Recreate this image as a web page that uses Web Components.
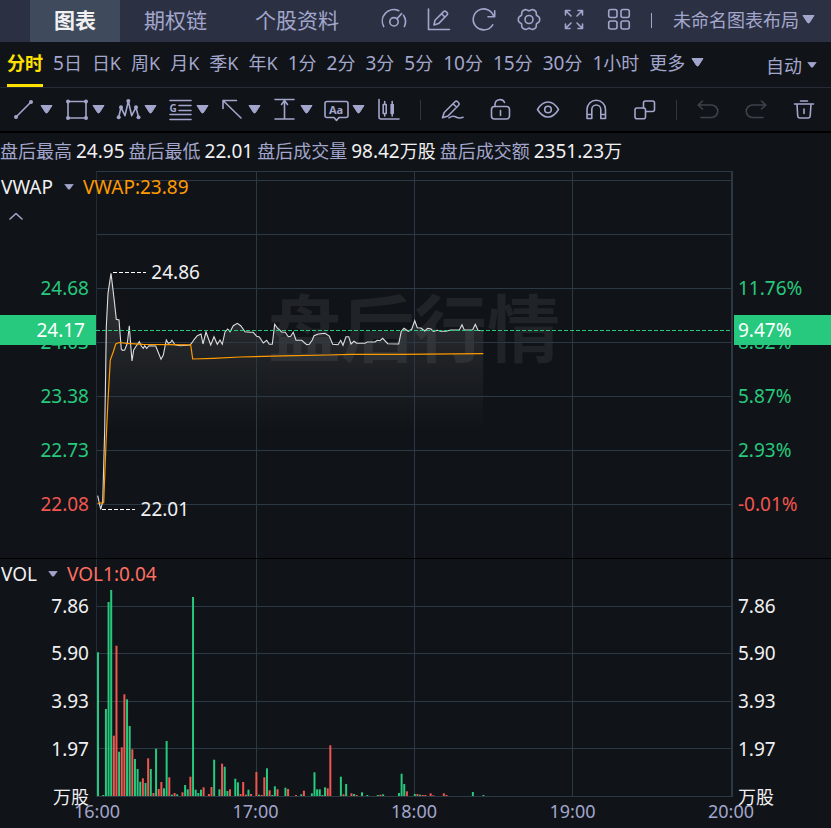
<!DOCTYPE html>
<html lang="zh-CN">
<head>
<meta charset="utf-8">
<meta name="viewport" content="width=device-width, initial-scale=1">
<title>图表</title>
<style>
  :root {
    --bg: #101317; --bar: #2b3142; --bar-active: #3f4b5c; --muted: #a3a6cc; --text: #f0f0f2;
    --grid: #2d3845; --up: #26c97d; --down: #f0564f; --vwap: #ff9a00; --accent: #ffe100; --line: #262b36;
  }
  html, body { margin: 0; height: 100%; background: var(--bg); }
  body { font-family: "Noto Sans", "Noto Sans CJK SC", sans-serif; font-size: 18px; color: var(--muted); }
</style>
</head>
<body>
<stock-app></stock-app>
<script>
const BASE = `
  <style>
    *, *::before { box-sizing: border-box; }
    button { font: inherit; color: inherit; background: none; border: 0; padding: 0; margin: 0; cursor: pointer; white-space: nowrap; }
  </style>`;

const define = (name, html, setup) => customElements.define(name, class extends HTMLElement {
  constructor() {
    super();
    this.attachShadow({ mode: 'open' }).innerHTML = BASE + html;
  }
  connectedCallback() { if (setup) setup(this, this.shadowRoot); }
});

/* Six-lobed gear outline */
const gear = () => {
  let d = '';
  for (let a = 0; a < 360; a += 5) {
    const t = a * Math.PI / 180, r = 9.9 + Math.cos(6 * t) - 0.25 * Math.cos(12 * t);
    d += (a ? 'L' : 'M') + (13 + r * Math.cos(t)).toFixed(2) + ' ' + (12.5 + r * Math.sin(t)).toFixed(2);
  }
  return d + 'Z';
};
const dot = (x, y) => `<circle cx="${x}" cy="${y}" r="2" fill="currentColor" stroke="none"/>`;

const ICONS = {
  gauge: '<path d="M2.7 19.5A11.5 11.5 0 0 1 17.8 3.7M22.5 8.3A11.5 11.5 0 0 1 23.4 19.5M16 11.8L20.6 6.6"/><circle cx="13" cy="14.8" r="4.2"/>',
  annotate: '<path d="M2.5 2v20.5H23.5M8 18l1-4.8 8.6-8.6q1.200-1.200 2.400 0l1 1q1.200 1.200 0 2.400L12.600 16.600zM15.600 6.800l3.400 3.400"/>',
  refresh: '<path d="M21.700 17.800A10.500 10.500 0 1 1 22.800 9.500M23.700 3.700v6H17"/>',
  gear: `<path d="${gear()}"/><circle cx="13" cy="12.500" r="4"/>`,
  expand: '<path d="M4.500 8V3.500H9M4.500 3.500l5.500 5.500M17 3.500h4.500V8M21.500 3.500L16 9M4.500 17v4.500H9M4.500 21.500L10 16M21.500 17v4.500H17M21.500 21.500L16 16"/>',
  grid: '<rect x="2.700" y="2.500" width="8.300" height="8" rx="2"/><rect x="15" y="2.500" width="8.300" height="8" rx="2"/><rect x="2.700" y="14" width="8.300" height="8" rx="2"/><rect x="15" y="14" width="8.300" height="8" rx="2"/>',
  line: '<path d="M5 20L20 5"/>' + dot(5, 20) + dot(20, 5),
  rect: '<path d="M5 4.500h18v16.500H5z"/>' + dot(5, 4.5) + dot(23, 4.5) + dot(5, 21) + dot(23, 21),
  pattern: '<path d="M3.700 20.300L6 10.300l4 8.400L13.300 4l3.400 14.700 4.300-8.400 2.500 10"/>' + dot(3.7, 20.3) + dot(6, 10.3) + dot(13.3, 4) + dot(21, 10.3) + dot(23.5, 20.3),
  gann: '<path d="M3 3.500h21M12 8.500h12M12 13.500h12M3 17.500h21M3 22.500h21"/><text x="2.500" y="14.500" font-size="10" font-weight="700" fill="currentColor" stroke="none">G</text>',
  arrow: '<path d="M22 21L4 3.500M4 11.500v-8h13.500"/>',
  measure: '<path d="M4 2.500h19M4 22h19M13.500 3.500V22M10.500 7.500l3-4 3 4"/>',
  text: '<path d="M4 4.500h19q2 0 2 2v12q0 2-2 2h-7l-2.500 3-2.500-3H4q-2 0-2-2v-12q0-2 2-2z"/><text x="6" y="16.500" font-size="11" font-weight="700" fill="currentColor" stroke="none">Aa</text>',
  candles: '<path d="M4 2.500v17.500q0 2 2 2h18M9.700 4.500v2.500M9.700 17v2M17.200 4.500V19"/><rect x="8.200" y="7.500" width="3" height="9"/><rect x="15.400" y="7" width="3.600" height="10" fill="currentColor" stroke="none"/>',
  draw: '<path d="M3.500 20.800l1.700-5.300L16 4.700q1.300-1.300 2.600 0l1 1q1.300 1.300 0 2.600L9 19zM14 6.700l3.600 3.600M10 20.800q4-2.600 7-.8t7 .3"/>',
  unlock: '<rect x="4.500" y="9.500" width="18" height="12.500" rx="3"/><path d="M8 9.500V7.500a5 5 0 0 1 9.500-2M13.500 13.500v5"/>',
  eye: '<path d="M2.500 12.500Q7 5 13 5t10.500 7.500Q19 20 13 20T2.500 12.500z"/><circle cx="13" cy="12.500" r="3.300"/>',
  magnet: '<path d="M4 21.500V12.500a9.200 9.200 0 0 1 18.500 0v9h-4.700v-9a4.500 4.500 0 0 0-9 0v9zM4 17.500h4.800M17.800 17.500h4.700"/>',
  swap: '<path d="M12.500 11V6q0-2 2-2h7q2 0 2 2v6.500q0 2-2 2h-6.500"/><rect x="4" y="11" width="10.500" height="10.800" rx="2"/>',
  undo: '<path d="M7.500 4l-4.300 4 4.300 4M3.500 8H16.500a6.200 6.200 0 0 1 0 12.500H6"/>',
  redo: '<path d="M18.500 4l4.300 4-4.300 4M22.500 8H9.500a6.200 6.200 0 0 0 0 12.500H20"/>',
  trash: '<path d="M3.500 7h19M9.500 4h7M6 7l.7 11.700q.2 2.300 2.300 2.300h8q2 0 2.200-2.300L20 7M13 12v4.500"/>',
  up: '<path d="M7 15l6-5.500 6 5.500"/>',
};

define('icon-glyph', `
  <style>:host { display: block; flex: none; width: 26px; height: 26px; } svg { display: block; width: 100%; height: 100%; overflow: visible; }</style>
  <svg viewBox="0 0 26 26" fill="none" stroke="currentColor" stroke-width="1.6" stroke-linecap="round" stroke-linejoin="round" aria-hidden="true"></svg>`,
  (el, root) => { root.querySelector('svg').innerHTML = ICONS[el.getAttribute('name')]; });

define('caret-down', `
  <style>
    :host { display: block; flex: none; width: 13px; height: 9px; }
    :host([small]) { width: 10px; height: 6px; }
    svg { display: block; width: 100%; height: 100%; }
  </style>
  <svg viewBox="0 0 13 9" preserveAspectRatio="none" aria-hidden="true"><path d="M1 .5H12L7.500 7.500Q6.500 8.500 5.500 7.500Z" fill="currentColor" stroke="currentColor" stroke-linejoin="round"/></svg>`);

define('tool-button', `
  <style>
    :host { display: block; flex: none; }
    :host([off]) { color: #3f424c; }
    button { display: flex; align-items: center; gap: 3px; }
    caret-down { display: none; }
    :host([menu]) caret-down { display: block; }
  </style>
  <button type="button"><icon-glyph></icon-glyph><caret-down></caret-down></button>`,
  (el, root) => {
    root.querySelector('icon-glyph').replaceWith(Object.assign(document.createElement('template'), {
      innerHTML: `<icon-glyph name="${el.getAttribute('icon')}"></icon-glyph>` }).content);
    const b = root.querySelector('button');
    b.setAttribute('aria-label', el.getAttribute('label'));
    b.disabled = el.hasAttribute('off');
    if (el.hasAttribute('menu')) b.setAttribute('aria-haspopup', 'menu');
  });

define('bar-rule', `<style>:host { display: block; flex: none; width: 1px; height: 20px; background: #303643; } :host([bright]) { height: 15px; background: var(--muted); }</style>`);

define('top-bar', `
  <style>
    :host { display: flex; height: 42px; background: var(--bar); padding: 0 16px 0 30px; align-items: stretch; }
    nav { display: flex; font-size: 21px; }
    nav button { padding: 0 24px 4px; }
    nav button[aria-current] { background: var(--bar-active); color: var(--text); font-weight: 700; }
    .icons { display: flex; align-items: center; gap: 19px; margin-left: 18px; padding-bottom: 2px; }
    .layout { display: flex; align-items: center; gap: 3px; margin-left: auto; padding-bottom: 4px; }
  </style>
  <nav aria-label="视图">
    <button type="button" aria-current="page">图表</button><button type="button">期权链</button><button type="button">个股资料</button>
  </nav>
  <div class="icons">
    <tool-button icon="gauge" label="指标"></tool-button>
    <tool-button icon="annotate" label="画线"></tool-button>
    <tool-button icon="refresh" label="刷新"></tool-button>
    <tool-button icon="gear" label="设置"></tool-button>
    <tool-button icon="expand" label="全屏"></tool-button>
    <tool-button icon="grid" label="多图"></tool-button>
    <bar-rule bright></bar-rule>
  </div>
  <button type="button" class="layout" aria-haspopup="menu">未命名图表布局<caret-down></caret-down></button>`);

define('period-bar', `
  <style>
    :host { display: flex; height: 46px; padding: 0 14px 0 7px; border-bottom: 1px solid var(--line); }
    nav { display: flex; gap: 10px; }
    nav button { display: flex; align-items: center; padding-bottom: 2px; border-bottom: 3px solid transparent; }
    nav button[aria-current] { color: var(--accent); font-weight: 700; border-color: var(--accent); }
    nav caret-down { margin-left: 6px; }
    .num { font-size: 19px; }
    .auto { display: flex; align-items: center; gap: 5px; margin-left: auto; }
  </style>
  <nav aria-label="周期"></nav>
  <button type="button" class="auto" aria-haspopup="menu">自动<caret-down small></caret-down></button>`,
  (el, root) => {
    root.querySelector('nav').innerHTML = ['分时', '5日', '日K', '周K', '月K', '季K', '年K', '1分', '2分', '3分', '5分', '10分', '15分', '30分', '1小时', '更多']
      .map((t, i) => `<button type="button"${i ? '' : ' aria-current="true"'}><span>${t.replace(/\d+/, '<span class="num">$&</span>')}</span>${t === '更多' ? '<caret-down></caret-down>' : ''}</button>`).join('');
  });

define('draw-bar', `
  <style>
    :host { display: flex; align-items: center; justify-content: space-between; height: 45px; padding: 0 14px 0 11px; border-bottom: 2px solid #000; }
    div { display: flex; align-items: center; }
    .shapes { gap: 10px; }
    .edit { gap: 22px; }
  </style>
  <div class="shapes">
    <tool-button menu icon="line" label="线段"></tool-button>
    <tool-button menu icon="rect" label="矩形"></tool-button>
    <tool-button menu icon="pattern" label="形态"></tool-button>
    <tool-button menu icon="gann" label="江恩"></tool-button>
    <tool-button menu icon="arrow" label="箭头"></tool-button>
    <tool-button menu icon="measure" label="测量"></tool-button>
    <tool-button menu icon="text" label="文本"></tool-button>
    <tool-button icon="candles" label="K线"></tool-button>
  </div>
  <bar-rule></bar-rule>
  <div class="edit">
    <tool-button icon="draw" label="连续绘制"></tool-button>
    <tool-button icon="unlock" label="锁定"></tool-button>
    <tool-button icon="eye" label="显示"></tool-button>
    <tool-button icon="magnet" label="吸附"></tool-button>
    <tool-button icon="swap" label="图层"></tool-button>
  </div>
  <bar-rule></bar-rule>
  <div class="edit">
    <tool-button off icon="undo" label="撤销"></tool-button>
    <tool-button off icon="redo" label="重做"></tool-button>
    <tool-button icon="trash" label="删除"></tool-button>
  </div>`);

define('quote-summary', `
  <style>
    :host { display: block; height: 38px; line-height: 37px; white-space: nowrap; }
    dl { display: flex; gap: 4px; margin: 0; }
    div { display: flex; gap: 4px; }
    dd { margin: 0; color: var(--text); }
    .num { font-size: 19px; }
  </style>
  <dl>
    <div><dt>盘后最高</dt><dd><span class="num">24.95</span></dd></div>
    <div><dt>盘后最低</dt><dd><span class="num">22.01</span></dd></div>
    <div><dt>盘后成交量</dt><dd><span class="num">98.42</span>万股</dd></div>
    <div><dt>盘后成交额</dt><dd><span class="num">2351.23</span>万</dd></div>
  </dl>`);

define('indicator-legend', `
  <style>
    :host { display: flex; align-items: center; gap: 9px; line-height: 26px; white-space: nowrap; }
    button { display: flex; align-items: center; gap: 11px; color: var(--text); }
    caret-down { color: var(--muted); }
  </style>
  <button type="button" aria-haspopup="menu"><slot name="name"></slot><caret-down small></caret-down></button><slot></slot>`);

/* Traces are stored at three samples per drawing unit, each run relative to its own origin. */
const run = (ox, oy, s) => s.split(' ').map(p => {
  const [x, y] = p.split(',').map(Number);
  return ((ox + x) / 3).toFixed(1) + ',' + ((oy + y) / 3).toFixed(1);
}).join(' ');
const PRICE = [
  run(0, 1110, '293,377 302,418 308,395 314,180 317,0'),
  run(270, 780, '49,200 54,100 63,40 72,115 79,178 87,180 94,268 98,271 104,270 112,250 118,197 122,255 126,303 131,270 137,260 148,245 154,258 160,265 164,257 170,265 177,257 197,258 213,298 220,285 229,240 235,250 242,247 246,241 255,254 270,257 300,255 306,248 313,238'),
  run(0, 390, '592,617 603,612 609,642 618,606 632,645 642,620 652,643 660,630 667,643 675,606 683,597 690,605 700,587 712,580 722,587 735,605'),
  run(750, 810, '0,187 10,187 20,199 28,201 40,219 50,211 58,223 67,223 74,163 82,174 95,186 106,187 115,200 122,199 130,187 138,211 155,211 170,224 178,223 187,210 192,197 205,192 225,190 238,198 248,223 264,224 272,211 279,226 288,200 296,200 303,222 312,214 320,220 345,220 352,216 375,216 382,211 390,212 398,205 413,221 446,222 454,184 462,175 475,184 485,178 494,152 502,173 513,174 524,183 533,175 543,177 550,184 562,181 572,184 588,184 602,180 628,180 636,164 643,180 668,179 676,163 684,181 700,182'),
].join(' ');
const VWAP = '97.5,503.5 103.7,502.7 106,443 108,400 110.3,360 113.3,351.7 115.7,344 119,342.5 127,343.3 143,344.3 190.7,344.8 192.7,359 213,358.3 240,357 283,355.8 328,355 350,354.4 400,354.3 483.3,353.7';
const GRID_X = '<path d="M256.5 0V900M414.5 0V900M572.5 0V900"/><path d="M96.500 0V900" stroke="#232b36"/><path d="M732 0V900" stroke-width="2"/>';

define('price-panel', `
  <style>
    :host { display: grid; grid-template-columns: 96px 1fr 99px; position: relative; min-height: 0; font-size: 19px; border-bottom: 1px solid #000; overflow: hidden; }
    ol { margin: 0; padding: 0; list-style: none; display: grid; grid-template-rows: 90fr repeat(5, 54fr) 27fr; line-height: 26px; color: var(--up); }
    ol::before { content: ""; }
    li { align-self: center; }
    li:last-child { color: var(--down); }
    .left { text-align: right; padding-right: 7px; }
    .right { padding-left: 6px; }
    .plot { position: relative; min-width: 0; }
    svg { position: absolute; inset: 0; width: 100%; height: 100%; overflow: visible; }
    svg * { vector-effect: non-scaling-stroke; }
    .mark { position: absolute; inset: 39.500% 0 auto; transform: translateY(-50%); text-align: center; font-size: 73px; line-height: 1; font-weight: 700; color: #202327; font-family: "Noto Sans CJK SC", sans-serif; white-space: nowrap; }
    .tag { position: absolute; top: 37.200%; height: 30px; line-height: 30px; background: var(--up); color: #fff; }
    .tag.l { left: 0; width: 96px; padding-right: 11px; text-align: right; }
    .tag.r { right: 0; width: 97px; padding-left: 4px; }
    .note { position: absolute; line-height: 26px; color: var(--text); transform: translateY(-50%); }
    .high { left: 8.700%; top: 26.100%; }
    .low { left: 7%; top: 87.300%; }
    .legend { position: absolute; left: 1px; top: 3px; }
    .legend span { color: var(--vwap); }
    .fold { position: absolute; left: 3px; top: 33px; }
  </style>
  <ol class="left"><li>24.68</li><li>24.03</li><li>23.38</li><li>22.73</li><li>22.08</li></ol>
  <div class="plot">
    <div class="mark">盘后行情</div>
    <svg viewBox="96 171 636 387" preserveAspectRatio="none" fill="none" role="img" aria-label="盘后分时走势">
      <defs><linearGradient id="fade" gradientUnits="userSpaceOnUse" x1="0" y1="273" x2="0" y2="430"><stop stop-color="#fff" stop-opacity=".14"/><stop offset="1" stop-color="#fff" stop-opacity="0"/></linearGradient></defs>
      <polygon fill="url(#fade)" points="${PRICE} 483,440 105,440"/>
      <g stroke="#2d3845"><path d="M96 171.500H732M96 180.500H732M96 234.500H732M96 288.500H732M96 342.500H732M96 396.500H732M96 450.500H732M96 504.500H732"/>${GRID_X.replaceAll(' 0V', ' 171V')}</g>
      <polyline stroke="#dededf" stroke-width="1.100" points="${PRICE}"/>
      <polyline stroke="#ff9a00" stroke-width="1.200" points="${VWAP}"/>
      <path d="M96 330.500H732" stroke="#26c97d" stroke-dasharray="4 2"/>
      <path d="M113 272.500H146M102 509.500H135" stroke="#fff" stroke-dasharray="4 2"/>
    </svg>
    <div class="note high">24.86</div><div class="note low">22.01</div>
  </div>
  <ol class="right"><li>11.76%</li><li>8.82%</li><li>5.87%</li><li>2.93%</li><li>-0.01%</li></ol>
  <div class="tag l">24.17</div><div class="tag r">9.47%</div>
  <indicator-legend class="legend"><b slot="name" style="font-weight:400">VWAP</b><span>VWAP:23.89</span></indicator-legend>
  <tool-button class="fold" icon="up" label="收起"></tool-button>`);

/* Minute : bar height in thirds : g = rise, r = fall */
const VOLUME = '0:431g 2:3g 3:261g 4:582g 5:618g 6:181r 7:451r 8:133g 9:146r 10:305r 11:290g 12:210g 13:140r 14:111g 15:81g 16:43g 17:53r 18:39g 19:113r 20:81g 21:9r 22:142g 23:21r 24:42r 25:23g 26:165g 27:56r 28:4g 29:9r 30:5g 32:11r 33:33g 34:20g 35:58r 36:597g 37:19g 38:9g 39:19g 40:26r 42:6r 43:27r 44:109g 46:20g 47:97r 48:88g 49:15g 50:20r 52:52g 53:41g 54:6r 55:42r 56:4r 57:19g 58:6r 60:72r 61:4g 62:3r 63:56r 64:83g 65:17r 66:3g 67:29g 68:20r 71:25g 72:21r 75:3r 77:5g 78:16r 81:8g 82:71g 83:20g 84:20g 85:3g 86:26g 87:23r 88:152r 92:58g 93:5r 94:36g 96:8r 97:6g 98:3r 100:11g 102:3g 106:3g 107:4r 108:5g 114:9g 115:67g 116:36g 117:14r 120:6g 121:6r 122:4g 123:3r 124:3r 126:8r 127:2r 131:8r 132:3r 142:12g 146:3g'
  .split(' ').map(s => {
    const [, i, h, c] = s.match(/(\d+):(\d+)(.)/);
    return `<rect x="${(97 + i * 2.64).toFixed(2)}" y="${(796 - h / 3).toFixed(1)}" width="2" height="${(h / 3).toFixed(1)}" fill="${c === 'g' ? '#26c97d' : '#f0564f'}"/>`;
  }).join('');

define('volume-panel', `
  <style>
    :host { display: grid; grid-template-columns: 96px 1fr 99px; position: relative; min-height: 0; font-size: 19px; color: var(--text); }
    ol { margin: 0; padding: 0; list-style: none; display: grid; grid-template-rows: 23fr 47fr 48fr 47fr 48fr 24fr; line-height: 24px; }
    ol::before { content: ""; }
    li { align-self: center; }
    li:last-child { align-self: end; margin-bottom: -12px; font-size: 18px; }
    .left { text-align: right; padding-right: 7px; }
    .right { padding-left: 6px; }
    .plot { position: relative; min-width: 0; }
    svg { position: absolute; inset: 0; width: 100%; height: 100%; overflow: visible; }
    path { vector-effect: non-scaling-stroke; }
    .legend { position: absolute; left: 1px; top: 2px; }
    .legend span { color: #ff6f61; }
  </style>
  <ol class="left"><li>7.86</li><li>5.90</li><li>3.93</li><li>1.97</li><li>万股</li></ol>
  <div class="plot">
    <svg viewBox="96 559 636 238" preserveAspectRatio="none" fill="none" role="img" aria-label="成交量">
      <g stroke="#2d3845"><path d="M96 606.500H732M96 653.500H732M96 701.500H732M96 748.500H732M96 796.500H732"/>${GRID_X.replaceAll(' 0V900', ' 559V797')}</g>
      ${VOLUME}
    </svg>
  </div>
  <ol class="right"><li>7.86</li><li>5.90</li><li>3.93</li><li>1.97</li><li>万股</li></ol>
  <indicator-legend class="legend"><b slot="name" style="font-weight:400">VOL</b><span>VOL1:0.04</span></indicator-legend>`);

define('time-axis', `
  <style>
    :host { display: flex; justify-content: space-between; height: 31px; margin: 0 100px 0 97px; line-height: 28px; }
    time { width: 0; display: flex; justify-content: center; }
  </style>
  <time>16:00</time><time>17:00</time><time>18:00</time><time>19:00</time><time>20:00</time>`);

define('stock-app', `
  <style>
    :host { display: flex; flex-direction: column; height: 100vh; min-height: 600px; overflow: hidden; }
    main { flex: 1; min-height: 0; display: grid; grid-template-rows: 388fr 238fr auto; }
  </style>
  <top-bar></top-bar>
  <period-bar></period-bar>
  <draw-bar></draw-bar>
  <quote-summary></quote-summary>
  <main><price-panel></price-panel><volume-panel></volume-panel><time-axis></time-axis></main>`);
</script>
</body>
</html>
